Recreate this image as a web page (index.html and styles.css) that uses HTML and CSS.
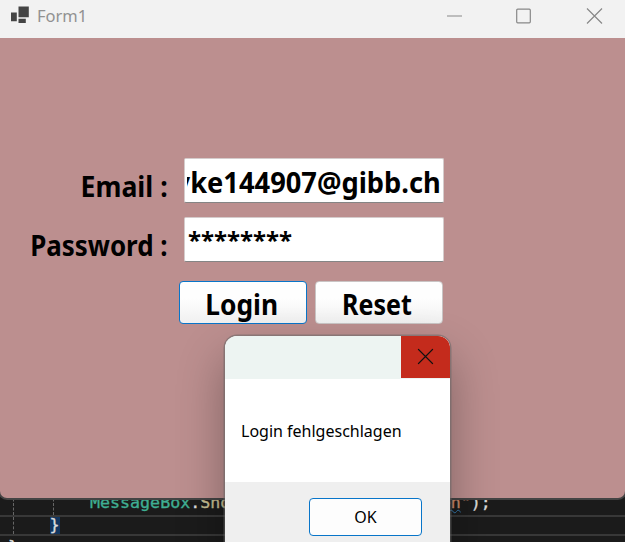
FILE: index.html
```html
<!DOCTYPE html>
<html lang="de">
<head>
<meta charset="utf-8">
<title>Form1</title>
<link rel="stylesheet" href="styles.css">
</head>
<body>
<div class="desktop">
  <section class="editor">
    <div class="row statement"><i class="guide"></i><i class="guide inner"></i><code><span class="type">MessageBox</span>.<span class="method">Show</span>(<span class="string">"Login <span class="typo">fehlgeschlagen</span>"</span>);</code></div>
    <div class="row closing"><i class="guide"></i><code class="brace">}</code></div>
    <div class="row outer"><code>}</code></div>
  </section>
  <main class="window">
    <header class="titlebar">
      <svg class="app-icon" width="20" height="20" viewBox="0 0 20 20"><path d="M8.500.500h10.300v10.800H8.500zM1 6.500h5.800v8.800H1zM8.500 12.700h7.300v4.300H8.500z"/></svg>
      <h1>Form1</h1>
      <svg class="controls" width="160" height="18" viewBox="0 0 160 18"><path d="M0 9h15M140 1.500l15 15M155 1.500l-15 15"/><rect x="69.700" y="2.200" width="13.600" height="13.600" rx="1"/></svg>
    </header>
    <form class="form">
      <label class="email-label"><span>Email :</span></label>
      <div class="field"><div class="clip email"><span>yke144907@gibb.ch</span></div></div>
      <label class="password-label"><span>Password :</span></label>
      <div class="field"><div class="clip password"><span>********</span></div></div>
      <div class="buttons">
        <button type="button" class="login"><span>Login</span></button>
        <button type="button" class="reset"><span>Reset</span></button>
      </div>
    </form>
  </main>
  <section class="dialog">
    <header><div class="close"><svg width="16" height="16" viewBox="0 0 16 16"><path d="M.5.5l15 15M15.500.5l-15 15"/></svg></div></header>
    <p>Login fehlgeschlagen</p>
    <footer><button type="button">OK</button></footer>
  </section>
</div>
</body>
</html>
```

FILE: styles.css
```css
* { box-sizing: border-box; }
body { margin: 0; font-family: "Noto Sans", sans-serif; color: #000; }
.desktop { position: relative; width: 625px; height: 542px; overflow: hidden; background: #1b1b1b; }
.window { position: absolute; left: 0; top: 0; width: 625px; height: 498px; background: #bc8f8f; border-radius: 0 0 7px 7px; overflow: hidden; box-shadow: 0 0 0 2px #444; }
.titlebar { height: 38px; padding: 0 18px 7px 10px; display: flex; align-items: center; background: #f2f2f2; }
.app-icon { fill: #444; }
.titlebar h1 { margin: 0 auto 0 7px; font-size: 16.5px; font-weight: 400; line-height: 24px; color: #919191; }
.controls { fill: none; stroke: #888; stroke-width: 1.2; }
.form { display: grid; grid-template-columns: 168px 260px; grid-template-rows: 45px 45px 43px; column-gap: 16px; row-gap: 14px; padding-top: 120px; font-size: 28px; font-weight: 700; line-height: 38px; }
.form label { text-align: right; padding-top: 9px; white-space: nowrap; }
.form span { display: inline-block; transform-origin: right; }
.email-label span { transform: scaleX(.95); }
.password-label span { transform: scaleX(.925); }
.field { background: #fff; border: 1px solid #d5cccc; border-bottom-color: #858585; border-radius: 2px; padding: 4px 2px 0; }
.clip { display: flex; overflow: hidden; height: 38px; white-space: nowrap; }
.email { justify-content: flex-end; }
.email span { transform: translateX(-.5px) scaleX(.974); }
.password { font-size: 24px; padding-left: 1px; }
.password span { transform: translateY(-1px); }
.buttons { grid-column: 1 / 3; display: flex; gap: 8px; padding-left: 179px; margin-top: 5px; }
button { font: inherit; color: #000; padding: 0; }
.buttons button { width: 128px; height: 43px; border: 1px solid #c9c4c4; border-radius: 4px; background: linear-gradient(#fefefe 40%, #f0f0f0); line-height: 38px; }
.form button span { transform-origin: center; transform: translate(-1px, 1px) scaleX(.94); }
.form .reset span { transform: translate(-2px, 1px) scaleX(.895); }
.buttons .login { border-color: #0875c9; }
.dialog { position: absolute; left: 225px; top: 336px; width: 225px; height: 230px; border-radius: 12px; overflow: hidden; background: #fff; box-shadow: 0 0 0 1.5px #6668, 0 22px 48px #0005; }
.dialog header { height: 43px; background: #edf4f2; display: flex; justify-content: flex-end; }
.close { width: 49px; height: 42px; background: #c42b1c; display: grid; place-items: center; }
.close svg { fill: none; stroke: #111; stroke-width: 1.1; transform: translate(-.5px, -.5px); }
.dialog p { margin: 0; height: 103px; padding: 40px 16px 0; font-size: 16px; line-height: 24px; white-space: nowrap; }
.dialog footer { height: 84px; padding: 16px 28px; display: flex; justify-content: flex-end; align-items: flex-start; background: #efefef; }
.dialog button { width: 113px; height: 38px; border: 1px solid #0875c9; border-radius: 4px; background: #fdfdfd; font-size: 16px; }
.editor { padding-top: 494px; font-family: "DejaVu Sans Mono", monospace; color: #dcdcdc; -webkit-text-stroke: .35px; }
.row { display: flex; height: 21px; font-size: 16.65px; line-height: 17px; border-bottom: 2px solid #383838; white-space: pre; }
.row code { font: inherit; }
.statement { height: 23px; padding-left: 12.5px; }
.guide { width: 0; border-left: 1.5px dashed #666; }
.inner { margin-left: 39.5px; }
.statement code { margin-left: 36px; }
.closing { padding-left: 12.5px; height: 19px; }
.closing .brace { margin-left: 36px; width: 10px; background: #12365f; line-height: 15px; }
.outer { padding: 2px 0 0 8px; border: 0; }
.type { color: #3fae92; }
.method { color: #c5bd91; }
.string { color: #c98a6b; }
.typo { text-decoration: underline wavy #347aae 1px; text-underline-offset: 1px; }
```
